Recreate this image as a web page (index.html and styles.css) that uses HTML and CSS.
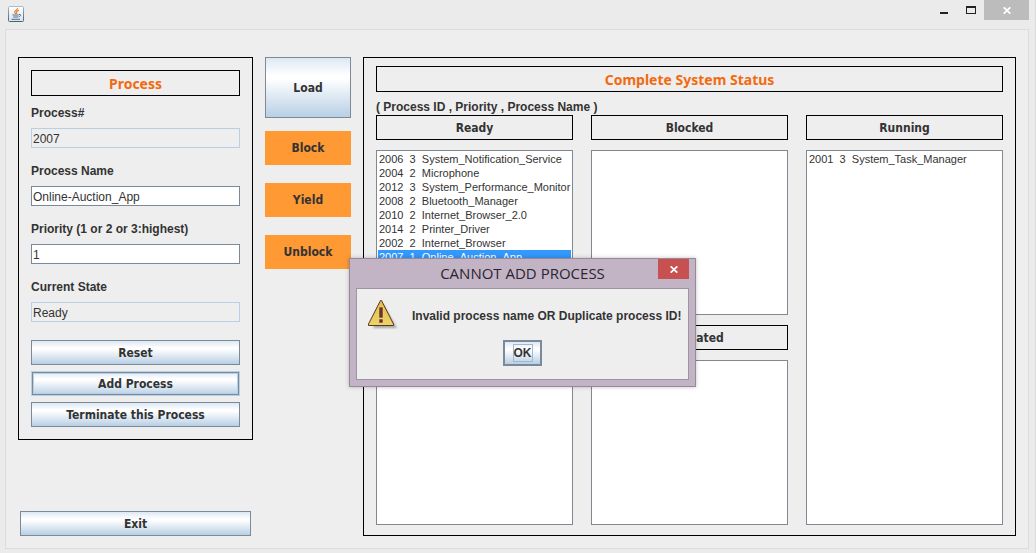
FILE: index.html
```html
<!DOCTYPE html>
<html lang="en">
<head>
<meta charset="utf-8">
<title>Process Manager</title>
<link rel="stylesheet" href="styles.css">
</head>
<body>
<div class="window">
  <header class="titlebar">
    <svg class="app-icon" width="16" height="16" viewBox="0 0 16 16" aria-hidden="true">
      <defs>
        <linearGradient id="tile" x1="0" y1="0" x2="0" y2="1">
          <stop offset="0" stop-color="#fff"/><stop offset="1" stop-color="#dbe2e8"/>
        </linearGradient>
        <linearGradient id="rim" x1="0" y1="0" x2="0" y2="1">
          <stop offset="0" stop-color="#a9b8c4"/><stop offset="1" stop-color="#46627c"/>
        </linearGradient>
      </defs>
      <rect x=".5" y=".5" width="15" height="15" rx="1" fill="url(#tile)" stroke="url(#rim)"/>
      <path d="M9.600 2.200C10 4 6.600 4.400 6.700 6c0 .9 1 1.300 1 2.200M11 4.300C9.300 4.900 8.200 5.600 8.600 6.500c.3.600.4.900-.1 1.500" fill="none" stroke="#e8822c" stroke-width="1.200"/>
      <path d="M4.500 9h6.300M5.200 11h5M11 8.500c2.300-.5 2.200 1.700-.3 2.200M3.500 13.300h8.500" fill="none" stroke="#4d7190" stroke-width="1"/>
    </svg>
    <div class="window-controls">
      <button class="control" type="button" aria-label="Minimize">
        <svg width="8" height="2" viewBox="0 0 8 2"><path d="M0 0h8v2H0z" fill="#222"/></svg>
      </button>
      <button class="control" type="button" aria-label="Maximize">
        <svg width="10" height="8" viewBox="0 0 10 8"><path fill-rule="evenodd" d="M0 0h10v8H0zM1 2v5h8V2z" fill="#222"/></svg>
      </button>
      <button class="control control-close" type="button" aria-label="Close">
        <svg width="8" height="7" viewBox="0 0 8 7"><path d="M.7.300l6.600 6.400M7.300.300L.7 6.700" stroke="#fff" stroke-width="1.700"/></svg>
      </button>
    </div>
  </header>

  <main class="client">
    <div class="sidebar">
      <form class="panel process-panel">
        <h2 class="heading accent">Process</h2>
        <div class="fields">
          <div class="field">
            <label for="pid">Process#</label>
            <input class="readonly" id="pid" type="text" value="2007" readonly>
          </div>
          <div class="field">
            <label for="pname">Process Name</label>
            <input id="pname" type="text" value="Online-Auction_App">
          </div>
          <div class="field">
            <label for="priority">Priority (1 or 2 or 3:highest)</label>
            <input id="priority" type="text" value="1">
          </div>
          <div class="field">
            <label for="state">Current State</label>
            <input class="readonly" id="state" type="text" value="Ready" readonly>
          </div>
        </div>
        <div class="form-actions">
          <button class="btn" type="button">Reset</button>
          <button class="btn btn-hover" type="button">Add Process</button>
          <button class="btn" type="button">Terminate this Process</button>
        </div>
      </form>
      <button class="btn exit" type="button">Exit</button>
    </div>

    <div class="commands">
      <button class="btn load" type="button">Load</button>
      <div class="transitions">
        <button class="flat" type="button">Block</button>
        <button class="flat" type="button">Yield</button>
        <button class="flat" type="button">Unblock</button>
      </div>
    </div>

    <section class="panel status-panel">
      <h2 class="heading accent">Complete System Status</h2>
      <p class="legend">( Process ID , Priority , Process Name )</p>
      <div class="queues">
        <div class="queue">
          <h3 class="heading">Ready</h3>
          <ul class="list" role="listbox" aria-label="Ready">
            <li role="option">2006  3  System_Notification_Service</li>
            <li role="option">2004  2  Microphone</li>
            <li role="option">2012  3  System_Performance_Monitor</li>
            <li role="option">2008  2  Bluetooth_Manager</li>
            <li role="option">2010  2  Internet_Browser_2.0</li>
            <li role="option">2014  2  Printer_Driver</li>
            <li role="option">2002  2  Internet_Browser</li>
            <li class="selected" role="option" aria-selected="true">2007  1  Online_Auction_App</li>
          </ul>
        </div>
        <div class="queue">
          <h3 class="heading">Blocked</h3>
          <ul class="list" role="listbox" aria-label="Blocked"></ul>
          <h3 class="heading">Terminated</h3>
          <ul class="list" role="listbox" aria-label="Terminated"></ul>
        </div>
        <div class="queue">
          <h3 class="heading">Running</h3>
          <ul class="list" role="listbox" aria-label="Running">
            <li role="option">2001  3  System_Task_Manager</li>
          </ul>
        </div>
      </div>
    </section>
  </main>

  <div class="dialog" role="alertdialog" aria-labelledby="dialog-title" aria-describedby="dialog-text">
    <div class="dialog-bar">
      <h2 class="dialog-title" id="dialog-title">CANNOT ADD PROCESS</h2>
      <button class="dialog-close" type="button" aria-label="Close">
        <svg width="8" height="7" viewBox="0 0 8 7"><path d="M.7.300l6.600 6.400M7.300.300L.7 6.700" stroke="#fff" stroke-width="1.700"/></svg>
      </button>
    </div>
    <div class="dialog-body">
      <div class="message">
        <svg class="warning" width="32" height="32" viewBox="0 0 32 32" aria-hidden="true">
          <defs>
            <linearGradient id="gold" x1="0" y1="0" x2="0" y2="1">
              <stop offset="0" stop-color="#e0bd48"/><stop offset="1" stop-color="#ecd468"/>
            </linearGradient>
            <filter id="soft"><feGaussianBlur stdDeviation="1"/></filter>
          </defs>
          <path d="M15 4L29 28H5z" fill="#000" opacity=".3" filter="url(#soft)"/>
          <path d="M12.500.500h1L25.500 24v1.500H.5V24z" fill="url(#gold)" stroke="#5a3529"/>
          <path d="M11 7h4v11h-4zM11 19h4v4h-4z" fill="#6b3429" stroke="#f3de86" stroke-width=".5"/>
        </svg>
        <p id="dialog-text">Invalid process name OR Duplicate process ID!</p>
      </div>
      <button class="ok" type="button"><span>OK</span></button>
    </div>
  </div>
</div>
</body>
</html>
```

FILE: styles.css
```css
* {
  box-sizing: border-box;
}

body {
  margin: 0;
  background: #ebebeb;
  color: #333;
  font: bold 12px/16px "Liberation Sans", Arial, sans-serif;
}

h2, h3, p, ul {
  margin: 0;
  padding: 0;
}

button {
  padding: 0;
  border: 0;
  color: inherit;
}

.window {
  position: relative;
  display: flex;
  flex-direction: column;
  min-height: 100vh;
  padding: 0 6px 4px 5px;
  border-right: 1px solid #dadada;
}

/* Title bar */
.titlebar {
  display: flex;
  justify-content: space-between;
  height: 29px;
  padding-left: 3px;
}

.app-icon {
  margin-top: 6px;
}

.window-controls {
  display: flex;
  height: 20px;
}

.control {
  display: flex;
  align-items: center;
  justify-content: center;
  width: 27px;
  background: none;
}

.control:first-child {
  align-items: flex-end;
  padding-bottom: 6px;
}

.control-close {
  width: 45px;
  background: #bcbcbc;
}

/* Main area */
.client {
  display: grid;
  flex: 1;
  grid-template-columns: 235px 86px minmax(0, 1fr);
  gap: 12px;
  padding: 27px 12px 12px;
  border: 1px solid #dcdcdc;
  background: #eee;
}

.panel {
  border: 1px solid #000;
}

.sidebar {
  display: flex;
  flex-direction: column;
  justify-content: space-between;
}

.process-panel {
  padding: 12px;
}

.heading {
  display: flex;
  align-items: center;
  justify-content: center;
  height: 25px;
  border: 1px solid #000;
  font: bold 12px/18px "DejaVu Sans Condensed", Tahoma, sans-serif;
}

.accent {
  height: 26px;
  padding-top: 2px;
  color: #f26a10;
  font: bold 14px/18px "Noto Sans", Tahoma, sans-serif;
}

.fields {
  display: grid;
  gap: 15px;
  margin: 9px 0 18px;
}

.field {
  display: grid;
  gap: 7px;
}

.field input {
  width: 100%;
  height: 20px;
  padding: 1px 1px 0;
  border: 1px solid #7a8a99;
  border-radius: 0;
  background: #fff;
  color: #333;
  font: 12px/16px "Liberation Sans", Arial, sans-serif;
  outline: 0;
}

.field .readonly {
  border-color: #b8cfe5;
  background: #eee;
}

.form-actions {
  display: grid;
  gap: 6px;
}

.btn {
  height: 25px;
  border: 1px solid #7a8a99;
  background: linear-gradient(#dde8f3 0%, #fff 30%, #fff 35%, #b8cfe5 100%);
  font: bold 12px/18px "DejaVu Sans Condensed", Tahoma, sans-serif;
}

.btn-hover {
  border-color: #b8cfe5;
  box-shadow: inset 0 0 0 1px #7a8a99, inset 0 0 0 2px #b8cfe5;
}

.exit {
  margin: 0 2px;
}

/* Commands */
.commands {
  display: flex;
  flex-direction: column;
  gap: 13px;
}

.load {
  height: 61px;
}

.transitions {
  display: grid;
  gap: 18px;
}

.flat {
  height: 34px;
  background: #f93;
  font: bold 12px/18px "DejaVu Sans Condensed", Tahoma, sans-serif;
}

/* Status */
.status-panel {
  display: flex;
  flex-direction: column;
  padding: 8px 12px 10px;
}

.legend {
  padding: 7px 0 0;
}

.queues {
  display: grid;
  flex: 1;
  grid-template-columns: repeat(3, minmax(0, 1fr));
  gap: 18px;
}

.queue {
  display: flex;
  flex-direction: column;
  gap: 10px;
}

.list {
  flex: 1;
  padding: 1px;
  border: 1px solid #828790;
  background: #fff;
  font: 11px/14px "Liberation Sans", Arial, sans-serif;
  list-style: none;
}

.list li {
  padding: 0 1px;
  overflow: hidden;
  white-space: pre;
}

.list .selected {
  background: #39f;
  color: #fff;
}

/* Message dialog */
.dialog {
  position: absolute;
  top: 258px;
  left: 349px;
  width: 347px;
  padding: 0 6px 6px;
  border: 1px solid #96899a;
  background: #c3b4c5;
  box-shadow: 0 0 4px rgba(0, 0, 0, .25);
}

.dialog-bar {
  display: grid;
  grid-template-columns: 1fr 31px;
  height: 29px;
}

.dialog-title {
  padding-left: 31px;
  color: #2a2430;
  font: 15px/29px "Open Sans", "Segoe UI", sans-serif;
  text-align: center;
}

.dialog-close {
  display: flex;
  align-items: center;
  justify-content: center;
  height: 20px;
  background: #c75050;
}

.dialog-body {
  display: flex;
  flex-direction: column;
  align-items: center;
  padding: 11px 0 13px;
  border: 1px solid #a093a4;
  background: #eee;
}

.message {
  display: flex;
  align-items: center;
  gap: 12px;
  width: 100%;
  height: 32px;
  margin-bottom: 8px;
  padding: 0 6px 0 11px;
}

.message p {
  white-space: nowrap;
}

.ok {
  width: 39px;
  height: 26px;
  border: 2px solid #7a8a99;
  background: linear-gradient(#dde8f3 0%, #fff 30%, #fff 35%, #b8cfe5 100%);
  font: bold 12px/16px "Liberation Sans", Arial, sans-serif;
}

.ok span {
  display: inline-block;
  border: 1px solid #a3b8cc;
}
```
